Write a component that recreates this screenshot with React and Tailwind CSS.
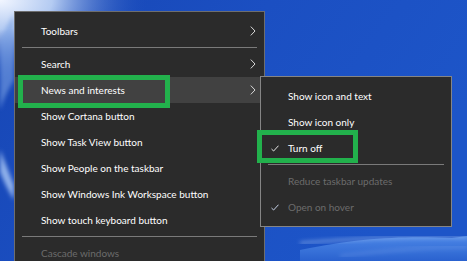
import React from "react";

const FONT = { fontFamily: 'Lato, "Noto Sans", sans-serif' };

const MAIN_ITEMS = [
  { label: "Toolbars", arrow: true },
  { sep: true },
  { label: "Search", arrow: true },
  { label: "News and interests", arrow: true, hover: true },
  { label: "Show Cortana button" },
  { label: "Show Task View button" },
  { label: "Show People on the taskbar" },
  { label: "Show Windows Ink Workspace button" },
  { label: "Show touch keyboard button" },
  { sep: true },
  { label: "Cascade windows", disabled: true },
];

const SUB_ITEMS = [
  { label: "Show icon and text" },
  { label: "Show icon only" },
  { label: "Turn off", checked: true },
  { sep: true },
  { label: "Reduce taskbar updates", disabled: true },
  { label: "Open on hover", disabled: true, checked: true },
];

function Chevron() {
  return (
    <svg width="6" height="10" viewBox="0 0 6 10" className="block">
      <path d="M0.8 0.6 L5 5 L0.8 9.4" fill="none" stroke="#d8d8d8" strokeWidth="1" />
    </svg>
  );
}

function Check({ color }) {
  return (
    <svg width="8" height="7" viewBox="0 0 8 7" className="block">
      <path d="M0.5 4 L2.6 6 L7.5 0.7" fill="none" stroke={color} strokeWidth="1" />
    </svg>
  );
}

function Wallpaper() {
  return (
    <svg className="absolute inset-0" width="467" height="261" viewBox="0 0 467 261">
      <defs>
        <linearGradient id="base" x1="0" y1="0" x2="1" y2="0.4">
          <stop offset="0" stopColor="#1746b4" />
          <stop offset="0.5" stopColor="#1b4fc2" />
          <stop offset="1" stopColor="#1d55c8" />
        </linearGradient>
        <radialGradient id="glow" cx="0" cy="0" r="0.32">
          <stop offset="0" stopColor="#f2f6ff" />
          <stop offset="0.35" stopColor="#b4cbf2" />
          <stop offset="1" stopColor="#1a4cbc" stopOpacity="0" />
        </radialGradient>
        <linearGradient id="wave" x1="0" y1="0" x2="0" y2="1">
          <stop offset="0" stopColor="#4b86e6" />
          <stop offset="1" stopColor="#2a62cf" />
        </linearGradient>
        <filter id="blur"><feGaussianBlur stdDeviation="2" /></filter>
      </defs>
      <rect width="467" height="261" fill="url(#base)" />
      <rect width="467" height="261" fill="url(#glow)" />
      <path d="M0 150 C 6 165 10 175 14 185 L14 200 C 8 190 3 180 0 172 Z" fill="#8fb0ea" filter="url(#blur)" />
      <path d="M0 40 C 5 30 10 20 14 14 L14 80 C 8 90 3 100 0 110 Z" fill="#7aa2e4" opacity="0.6" filter="url(#blur)" />
      <path d="M452 238 C 400 236 360 238 300 250 L300 261 L467 261 L467 236 Z" fill="url(#wave)" />
      <path d="M300 243 C 360 238 410 236 467 237" fill="none" stroke="#a9c6f3" strokeWidth="1.5" filter="url(#blur)" />
      <path d="M340 256 C 390 250 430 247 467 247" fill="none" stroke="#7fa6ec" strokeWidth="1" filter="url(#blur)" />
    </svg>
  );
}

function MenuRow({ item, textLeft, checkLeft, right }) {
  if (item.sep) {
    return (
      <div className="h-[7px] flex items-center px-[7px]">
        <div className="h-px w-full bg-[#7a7a7a]" />
      </div>
    );
  }
  return (
    <div
      className={`relative h-[26px] flex items-center text-[10px] ${
        item.hover ? "bg-[#414141]" : ""
      } ${item.disabled ? "text-[#6b6b6b]" : "text-white"}`}
      style={{ paddingLeft: textLeft }}
    >
      {item.checked && (
        <span className="absolute top-[10px]" style={{ left: checkLeft }}>
          <Check color={item.disabled ? "#c8d4ea" : "#e8e8e8"} />
        </span>
      )}
      <span className="flex-1 leading-none">{item.label}</span>
      {item.arrow && right}
    </div>
  );
}

export default function App() {
  return (
    <div className="relative w-[467px] h-[261px] overflow-hidden" style={FONT}>
      <Wallpaper />

      <div className="relative pl-[14px] pt-[11px]">
        <div className="w-[251px] h-[270px] bg-[#2b2b2b] border border-[#6e6e6e] pt-[6px]">
          {MAIN_ITEMS.map((item, i) => (
            <MenuRow
              key={i}
              item={item}
              textLeft={26}
              right={
                <span className="pr-[8px]">
                  <Chevron />
                </span>
              }
            />
          ))}
        </div>
      </div>

      <div className="absolute left-[260px] top-[76px] w-[192px] bg-[#2b2b2b] border border-[#858585] pt-[6px] pb-[6px]">
        {SUB_ITEMS.map((item, i) => (
          <MenuRow key={i} item={item} textLeft={27} checkLeft={10} />
        ))}
      </div>

      <div className="absolute left-[18px] top-[75px] w-[152px] h-[33px] border-[5px] border-[#22b14c]" />
      <div className="absolute left-[257px] top-[130px] w-[101px] h-[33px] border-[5px] border-[#22b14c]" />
    </div>
  );
}
